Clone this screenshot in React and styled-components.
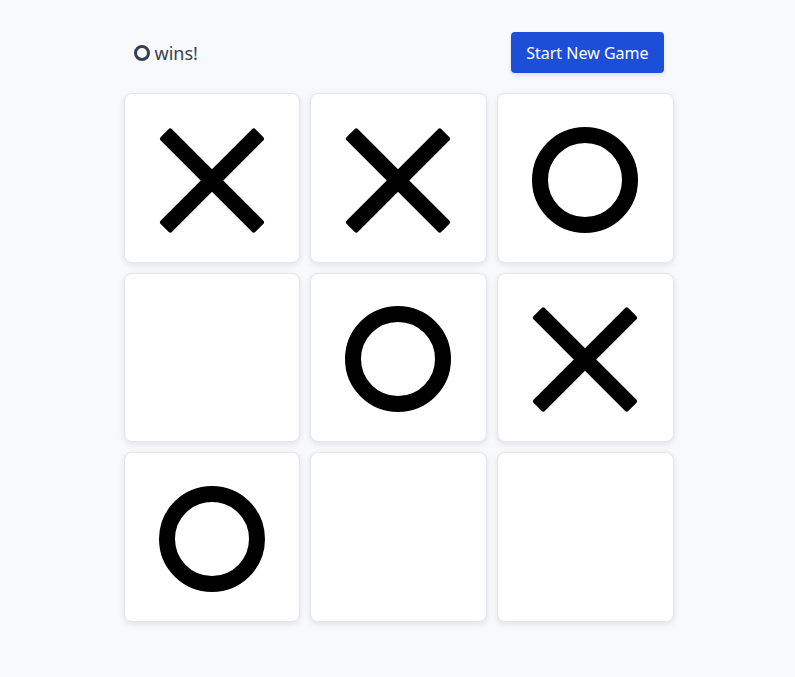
import styled, { createGlobalStyle } from "styled-components";

const GlobalStyle = createGlobalStyle`
  body {
    margin: 0;
    background: #f8f9fb;
    font-family: "Noto Sans", "Open Sans", sans-serif;
  }
`

const Page = styled.div`
  display: flex;
  justify-content: center;
  padding: 32px 0 40px 2px;
`

const Game = styled.div`
  width: 550px;
`

const Header = styled.div`
  display: flex;
  align-items: center;
  justify-content: space-between;
  padding: 0 10px;
  height: 41px;
  margin-bottom: 20px;
`

const Status = styled.div`
  display: flex;
  align-items: center;
  gap: 5px;
  font-size: 18px;
  color: #334155;
`

const NewGameButton = styled.button`
  height: 41px;
  padding: 0 15px;
  background: #1d4ed8;
  color: white;
  border: none;
  border-radius: 4px;
  font-family: "Noto Sans", sans-serif;
  font-size: 16px;
  box-shadow: 0 2px 4px rgba(15, 23, 42, 0.12);
  cursor: pointer;
  :hover {
    background: #1e40af;
  }
`

const Board = styled.div`
  display: grid;
  grid-template-columns: repeat(3, 1fr);
  grid-template-rows: 170px 169px 170px;
  gap: 10px;
`

const Cell = styled.button`
  display: flex;
  align-items: center;
  justify-content: center;
  padding: 3px 0 0;
  background: white;
  border: 1px solid #e3e6ea;
  border-radius: 8px;
  box-shadow: 0 2px 6px rgba(15, 23, 42, 0.1);
  cursor: ${props => (props.filled ? "default" : "pointer")};
`

const Cross = ({ size = 106 }) => (
  <svg width={size} height={size} viewBox="0 0 106 106">
    <rect x="-14" y="45.5" width="134" height="16" rx="2.5" transform="rotate(45 53 53.5)" fill="black" />
    <rect x="-14" y="45.5" width="134" height="16" rx="2.5" transform="rotate(-45 53 53.5)" fill="black" />
  </svg>
)

const Ring = ({ size = 106, stroke = 16, color = "black" }) => (
  <svg width={size} height={size} viewBox="0 0 106 106">
    <circle cx="53" cy="53" r={53 - stroke / 2} fill="none" stroke={color} strokeWidth={stroke} />
  </svg>
)

const squares = ["X", "X", "O", null, "O", "X", "O", null, null]

const App = () => {
  return (
    <Page>
      <GlobalStyle />
      <Game>
        <Header>
          <Status>
            <Ring size={16} stroke={20} color="#334155" />
            <span>wins!</span>
          </Status>
          <NewGameButton>Start New Game</NewGameButton>
        </Header>
        <Board>
          {squares.map((value, i) => (
            <Cell key={i} filled={!!value}>
              {value === "X" && <Cross />}
              {value === "O" && <Ring />}
            </Cell>
          ))}
        </Board>
      </Game>
    </Page>
  )
}

export default App;
